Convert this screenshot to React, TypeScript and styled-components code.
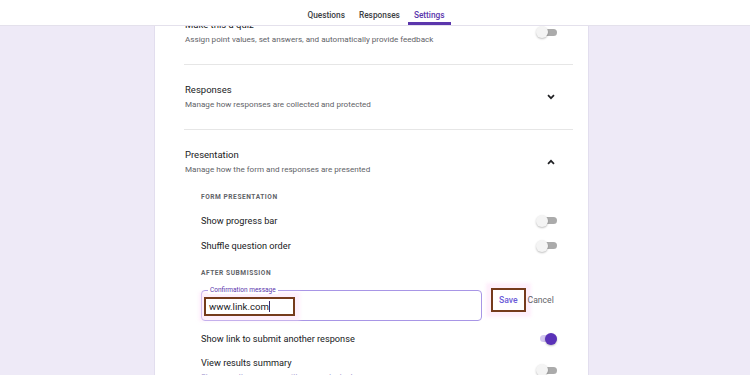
import React from "react";
import styled, { createGlobalStyle } from "styled-components";

const GlobalStyle = createGlobalStyle`
  html, body {
    margin: 0;
    padding: 0;
  }
  body {
    background: #eeeaf7;
    font-family: Roboto, "Liberation Sans", Arial, sans-serif;
    color: #202124;
  }
  * {
    box-sizing: border-box;
  }
`;

const Page = styled.div`
  width: 750px;
  height: 375px;
  display: flex;
  flex-direction: column;
  overflow: hidden;
  background: #eeeaf7;
`;

const Header = styled.header`
  flex: none;
  height: 26px;
  background: #fff;
  border-bottom: 1px solid #e4e1ec;
  display: flex;
  justify-content: center;
  padding-left: 2px;
  position: relative;
  z-index: 1;
`;

const Tabs = styled.nav`
  display: flex;
  gap: 2px;
`;

const Tab = styled.div<{ $active?: boolean }>`
  height: 25px;
  padding: 8px 6px 0;
  font-size: 8.3px;
  font-weight: 500;
  color: ${(p) => (p.$active ? "#5b36ac" : "#3c4043")};
  border-bottom: 3px solid ${(p) => (p.$active ? "#5b36ac" : "transparent")};
  display: flex;
  align-items: center;
`;

const Body = styled.main`
  flex: 1;
  overflow: hidden;
  padding-left: 154px;
`;

const Card = styled.div`
  width: 435px;
  margin-top: -26px;
  background: #fff;
  border-left: 1px solid #e2deee;
  border-right: 1px solid #e2deee;
  padding: 0 15px 0 29px;
  min-height: 500px;
`;

const Section = styled.section<{ $last?: boolean }>`
  padding: 18px 0 ${(p) => (p.$last ? "0" : "18px")};
  border-bottom: ${(p) => (p.$last ? "none" : "1px solid #e6e6e6")};
`;

const SectionHead = styled.div`
  display: flex;
  align-items: center;
  justify-content: space-between;
  padding-right: 16px;
`;

const Title = styled.div`
  font-size: 9.5px;
  line-height: 14px;
  color: #202124;
  padding-left: 1px;
`;

const Subtitle = styled.div`
  font-size: 8.1px;
  line-height: 14px;
  color: #5f6368;
  padding-left: 1px;
`;

const Chevron = styled.svg`
  width: 8px;
  height: 6px;
  margin-right: 2px;
  overflow: visible;
`;

const Toggle = styled.div<{ $on?: boolean }>`
  position: relative;
  width: 21px;
  height: 12px;
  flex: none;

  &::before {
    content: "";
    position: absolute;
    left: 4px;
    right: 0;
    top: 2.5px;
    height: 7px;
    border-radius: 4px;
    background: ${(p) => (p.$on ? "#d3c7f0" : "#ababab")};
  }

  &::after {
    content: "";
    position: absolute;
    top: 0;
    left: ${(p) => (p.$on ? "9px" : "0")};
    width: 12px;
    height: 12px;
    border-radius: 50%;
    background: ${(p) => (p.$on ? "#5a32b8" : "#f4f4f4")};
    box-shadow: 0 1px 2px rgba(0, 0, 0, 0.25);
  }
`;

const Inner = styled.div`
  padding-left: 17px;
  padding-top: 15px;
`;

const GroupLabel = styled.div<{ $gap?: number }>`
  font-size: 6.6px;
  line-height: 12px;
  font-weight: 700;
  letter-spacing: 0.55px;
  color: #5f6368;
  margin-top: ${(p) => p.$gap ?? 0}px;
  margin-bottom: 5px;
`;

const Row = styled.div<{ $gap?: number }>`
  display: flex;
  align-items: center;
  justify-content: space-between;
  min-height: 25px;
  padding-right: 16px;
  margin-top: ${(p) => p.$gap ?? 0}px;
`;

const RowText = styled.div`
  font-size: 9.2px;
  line-height: 14px;
  color: #202124;
`;

const RowSub = styled.div`
  font-size: 8px;
  line-height: 14px;
  color: #7d6fc0;
  opacity: 0.7;
`;

const FieldRow = styled.div`
  display: flex;
  align-items: flex-start;
  margin-top: 11px;
`;

const Field = styled.div`
  position: relative;
  width: 281px;
  height: 31px;
  border: 1px solid #a896e6;
  border-radius: 4px;
  padding: 0 0 0 2px;
  display: flex;
  align-items: center;
`;

const FieldLabel = styled.span`
  position: absolute;
  top: -5px;
  left: 6px;
  padding: 0 2px;
  background: #fff;
  font-size: 6.5px;
  line-height: 8px;
  color: #5b36ac;
`;

const Marked = styled.div`
  width: 91px;
  height: 19px;
  margin-top: 1px;
  border: 2px solid #753b1c;
  padding-left: 3px;
  display: flex;
  align-items: center;
  font-size: 9.6px;
  color: #202124;
  box-shadow: 0 0 3px 5px rgba(253, 226, 247, 0.55);
`;

const Caret = styled.span`
  width: 1px;
  height: 11px;
  background: #3a2a6a;
  margin-left: 0.5px;
`;

const Actions = styled.div`
  display: flex;
  align-items: center;
  margin-top: -2px;
  margin-left: 9px;
`;

const SaveButton = styled.div`
  height: 24px;
  padding: 0 6px;
  border: 2px solid #753b1c;
  display: flex;
  align-items: center;
  font-size: 8.6px;
  font-weight: 500;
  color: #6a5ad8;
  box-shadow: 0 0 3px 5px rgba(253, 226, 247, 0.55);
`;

const CancelButton = styled.div`
  margin-left: 2px;
  font-size: 8.6px;
  color: #5f6368;
`;

const ChevronIcon = ({ up }: { up?: boolean }) => (
  <Chevron viewBox="0 0 8 6">
    <path
      d={up ? "M1 4.8 L4 1.8 L7 4.8" : "M1 1.2 L4 4.2 L7 1.2"}
      fill="none"
      stroke="#202124"
      strokeWidth="1.7"
    />
  </Chevron>
);

export default function App() {
  return (
    <Page>
      <GlobalStyle />
      <Header>
        <Tabs>
          <Tab>Questions</Tab>
          <Tab>Responses</Tab>
          <Tab $active>Settings</Tab>
        </Tabs>
      </Header>
      <Body>
        <Card>
          <Section>
            <SectionHead>
              <div>
                <Title>Make this a quiz</Title>
                <Subtitle>Assign point values, set answers, and automatically provide feedback</Subtitle>
              </div>
              <Toggle />
            </SectionHead>
          </Section>
          <Section>
            <SectionHead>
              <div>
                <Title>Responses</Title>
                <Subtitle>Manage how responses are collected and protected</Subtitle>
              </div>
              <ChevronIcon />
            </SectionHead>
          </Section>
          <Section $last>
            <SectionHead>
              <div>
                <Title>Presentation</Title>
                <Subtitle>Manage how the form and responses are presented</Subtitle>
              </div>
              <ChevronIcon up />
            </SectionHead>
            <Inner>
              <GroupLabel>FORM PRESENTATION</GroupLabel>
              <Row>
                <RowText>Show progress bar</RowText>
                <Toggle />
              </Row>
              <Row>
                <RowText>Shuffle question order</RowText>
                <Toggle />
              </Row>
              <GroupLabel $gap={9}>AFTER SUBMISSION</GroupLabel>
              <FieldRow>
                <Field>
                  <FieldLabel>Confirmation message</FieldLabel>
                  <Marked>
                    www.link.com
                    <Caret />
                  </Marked>
                </Field>
                <Actions>
                  <SaveButton>Save</SaveButton>
                  <CancelButton>Cancel</CancelButton>
                </Actions>
              </FieldRow>
              <Row $gap={5}>
                <RowText>Show link to submit another response</RowText>
                <Toggle $on />
              </Row>
              <Row $gap={5}>
                <div>
                  <RowText>View results summary</RowText>
                  <RowSub>Share results summary with respondents. Learn more</RowSub>
                </div>
                <Toggle />
              </Row>
            </Inner>
          </Section>
        </Card>
      </Body>
    </Page>
  );
}
